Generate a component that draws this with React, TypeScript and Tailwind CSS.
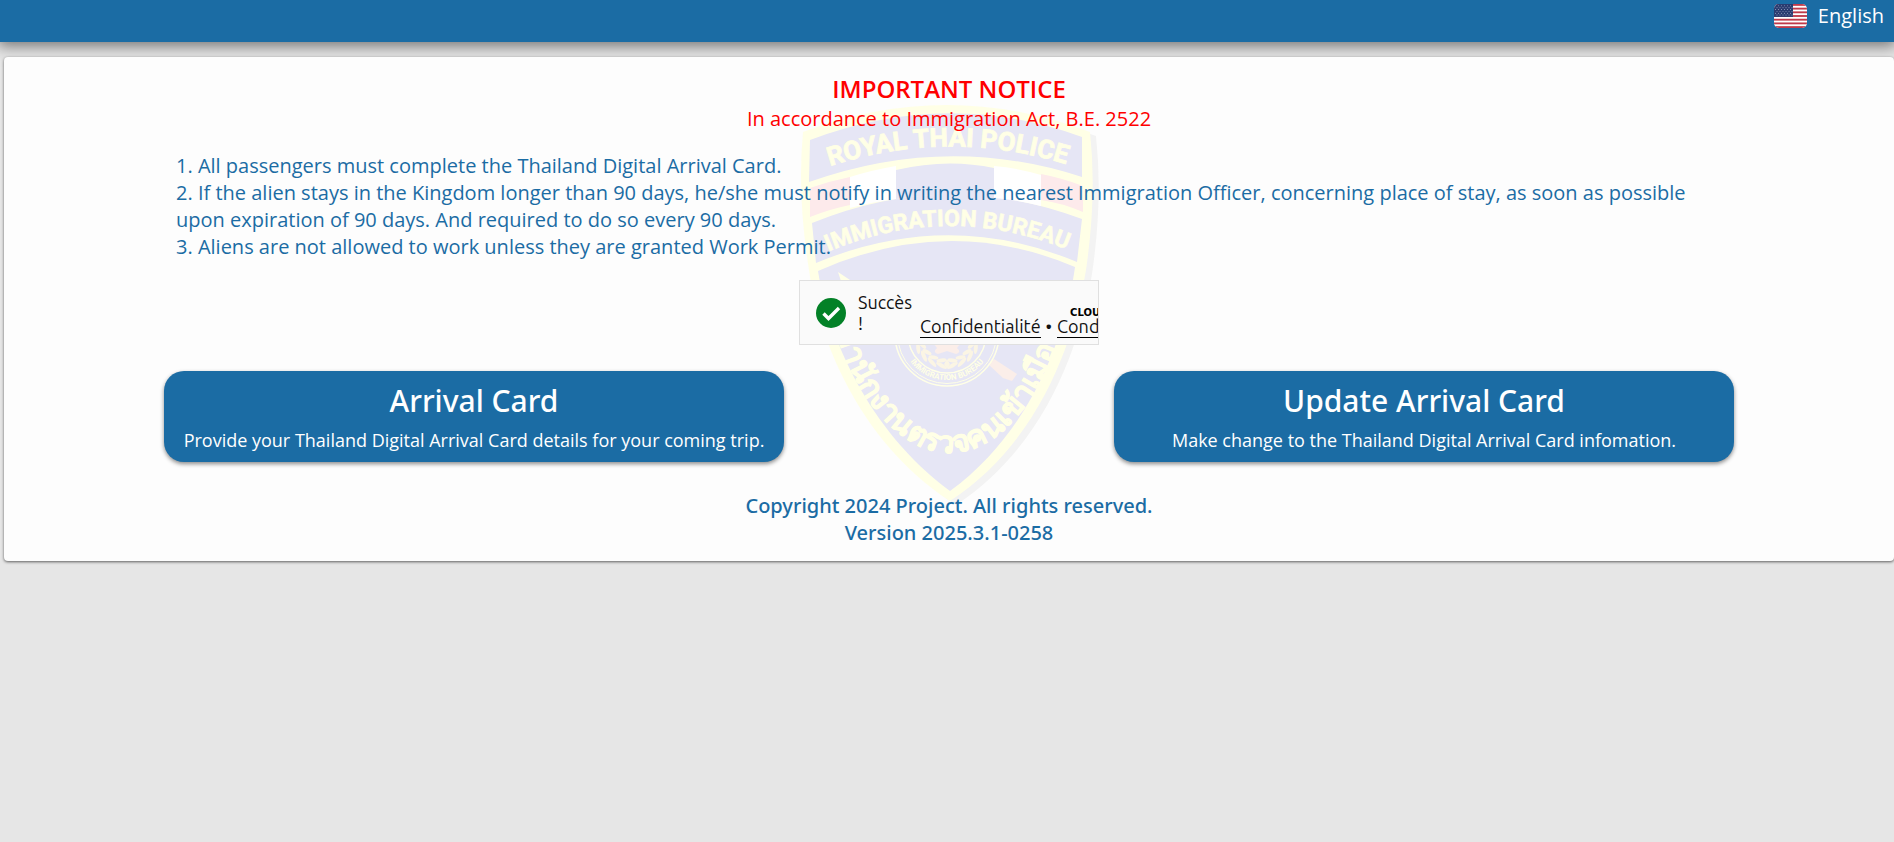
const NOTICES = [
  '1. All passengers must complete the Thailand Digital Arrival Card.',
  '2. If the alien stays in the Kingdom longer than 90 days, he/she must notify in writing the nearest Immigration Officer, concerning place of stay, as soon as possible upon expiration of 90 days. And required to do so every 90 days.',
  '3. Aliens are not allowed to work unless they are granted Work Permit.',
];

const ACTIONS = [
  {
    title: 'Arrival Card',
    text: 'Provide your Thailand Digital Arrival Card details for your coming trip.',
  },
  {
    title: 'Update Arrival Card',
    text: 'Make change to the Thailand Digital Arrival Card infomation.',
  },
];

const STRIPES = [0, 2, 4, 6, 8, 10, 12];
const STAR_ROWS = [0, 1, 2, 3, 4, 5];
const STAR_COLS = [0, 1, 2, 3, 4, 5];
const LEAVES = [18, 36, 54, 72, 90];

function UsFlag() {
  return (
    <svg className="h-6 w-[33px] rounded-[5px]" viewBox="0 0 33 26" preserveAspectRatio="none">
      <rect width="33" height="26" fill="#fff" />
      {STRIPES.map((i) => (
        <rect key={i} y={i * 2} width="33" height="2" fill="#c03a4a" />
      ))}
      <rect width="19" height="14" fill="#2a3c70" />
      {STAR_ROWS.map((row) =>
        STAR_COLS.map((col) => (
          <circle
            key={`${row}-${col}`}
            cx={1.5 + col * 3 + (row % 2) * 1.5}
            cy={2 + row * 2}
            r="0.5"
            fill="#c9cfdf"
          />
        ))
      )}
    </svg>
  );
}

function Emblem() {
  return (
    <svg
      className="pointer-events-none absolute left-1/2 top-[43px] h-[410px] w-[308px] -translate-x-1/2"
      viewBox="795 100 308 410"
      aria-hidden="true"
    >
      <defs>
        <path
          id="shield"
          d="M803 132Q947 78 1090 132Q1097 195 1086 270C1075 335 1043 440 950 501C857 440 818 335 809 270Q797 195 803 132Z"
        />
        <path id="arc-police" d="M824 168Q948 126 1072 166" />
        <path id="arc-bureau" d="M825 253Q948 200 1070 251" />
        <path id="arc-thai" d="M834 322C850 393 900 453 950 453C1000 453 1046 393 1064 322" />
        <path id="arc-ring" d="M901 334A46 46 0 0 0 993 334" />
      </defs>

      <use href="#shield" x="6" y="4" fill="#f3f3f3" />
      <use href="#shield" fill="#ffffe6" />

      <g fill="#e6e6f5">
        <path d="M810 140Q947 88 1082 137L1082 177Q947 133 809 182Z" />
        <path d="M896 170Q947 158 994 168V199Q947 191 896 199Z" />
        <path d="M812 223Q947 168 1082 219L1077 262Q948 208 816 263Z" />
        <path d="M818 271Q948 213 1075 267C1066 333 1033 430 950 491C867 430 828 335 818 271Z" />
      </g>
      <path d="M850 177Q872 170 896 166V199Q872 202 850 208Z" fill="#fff" />
      <path d="M994 166Q1018 168 1041 175V206Q1018 200 994 198Z" fill="#fff" />
      <path d="M810 188Q830 181 850 177V205Q830 209 810 217Z" fill="#fdeaeb" />
      <path d="M1041 174Q1062 178 1083 186V212Q1062 203 1041 200Z" fill="#fdeaeb" />

      <g fill="#ffffe6" textAnchor="middle" className="font-['Roboto'] font-bold">
        <text fontSize="26" stroke="#ffffe6" strokeWidth="0.8">
          <textPath href="#arc-police" startOffset="50%">ROYAL THAI POLICE</textPath>
        </text>
        <text fontSize="23" stroke="#ffffe6" strokeWidth="0.6">
          <textPath href="#arc-bureau" startOffset="50%">IMMIGRATION BUREAU</textPath>
        </text>
        <text fontSize="30" stroke="#ffffe6" strokeWidth="0.8" className="font-serif">
          <textPath href="#arc-thai" startOffset="50%">สำนักงานตรวจคนเข้าเมือง</textPath>
        </text>
        <text fontSize="8">
          <textPath href="#arc-ring" startOffset="50%">IMMIGRATION BUREAU</textPath>
        </text>
      </g>

      <path d="M838 272L853 282L842 284Z" fill="#ffffe6" />
      <path d="M988 364L994 359L1017 374L1012 381L1003 378Z" fill="#fbeee9" />
      <g fill="none" stroke="#ffffe6">
        <circle cx="947" cy="334" r="52" strokeWidth="1.5" />
        <circle cx="947" cy="334" r="49.5" strokeWidth="1" />
        <circle cx="947" cy="334" r="39" strokeWidth="1.5" />
      </g>
      <path
        d="M934 344H960L957 348Q962 352 956 354L947 351L938 354Q932 352 937 348Z"
        fill="#fbeee9"
      />
      {/* laurel round the lower half of the seal */}
      <g fill="#fbf5e4">
        {LEAVES.map((angle) => (
          <g key={angle}>
            <ellipse cx="947" cy="366" rx="6" ry="2" transform={`rotate(${angle - 8} 947 334) rotate(20 947 366)`} />
            <ellipse cx="947" cy="361" rx="5" ry="2" transform={`rotate(${angle - 6} 947 334) rotate(-20 947 361)`} />
            <ellipse cx="947" cy="366" rx="6" ry="2" transform={`rotate(${8 - angle} 947 334) rotate(-20 947 366)`} />
            <ellipse cx="947" cy="361" rx="5" ry="2" transform={`rotate(${6 - angle} 947 334) rotate(20 947 361)`} />
          </g>
        ))}
        <path d="M947 359L950 364L947 369L944 364Z" />
      </g>
    </svg>
  );
}

function ChallengeWidget() {
  return (
    <div className="relative mx-auto mt-5 flex h-[65px] w-[300px] items-center overflow-hidden border border-[#e0e0e0] bg-[#fafafa] pl-4 font-['Ubuntu','Noto_Sans',sans-serif] text-[18px] leading-[21px] text-[#111]">
      <svg className="size-[30px] shrink-0" viewBox="0 0 30 30" aria-hidden="true">
        <circle cx="15" cy="15" r="15" fill="#038127" />
        <path d="M7.5 15.5L12.5 20.5L23 10" fill="none" stroke="#fff" strokeWidth="3.4" />
      </svg>
      <p className="ml-3 w-[62px] shrink-0">Succès !</p>
      <div className="mt-[22px] flex shrink-0 flex-col items-end">
        <span className="font-['DejaVu_Sans'] text-[10px] font-bold leading-[7px] text-black">CLOUDFLARE</span>
        <div className="flex gap-[5px] whitespace-nowrap">
          <a href="#privacy" className="border-b border-black">Confidentialité</a>
          <span>•</span>
          <a href="#terms" className="border-b border-black">Conditions</a>
        </div>
      </div>
    </div>
  );
}

export default function App() {
  return (
    <div className="min-h-screen bg-[#e6e6e6] font-['Open_Sans',sans-serif] text-xl leading-[27px] text-[#1b6ca4]">
      <header className="relative flex h-[42px] items-start justify-end bg-[#1b6ca4] pr-2.5 shadow-[0_2px_14px_2px_rgba(0,0,0,0.5)]">
        <button type="button" className="flex items-center gap-[11px] pt-0.5 text-white">
          <UsFlag />
          English
        </button>
      </header>

      <main className="relative ml-1 mt-[15px] rounded bg-[#fdfdfd] pb-[15px] pt-4 shadow-[0_1px_3px_rgba(0,0,0,0.6)]">
        <Emblem />

        <div className="relative">
          <div className="text-center text-[#f00]">
            <h1 className="text-2xl font-semibold leading-8">IMPORTANT NOTICE</h1>
            <p>In accordance to Immigration Act, B.E. 2522</p>
          </div>

          <div className="mt-5 px-[172px]">
            {NOTICES.map((notice) => (
              <p key={notice}>{notice}</p>
            ))}
          </div>

          <ChallengeWidget />

          <div className="mt-[26px] flex justify-between px-[160px]">
            {ACTIONS.map((action) => (
              <button
                key={action.title}
                type="button"
                className="flex h-[91px] w-[620px] flex-col items-center justify-center gap-1.5 rounded-[20px] bg-[#1b6ca4] text-white shadow-[0_2px_4px_rgba(0,0,0,0.45)]"
              >
                <span className="font-['Noto_Sans'] text-[30px] font-medium leading-10">{action.title}</span>
                <span className="text-lg leading-[26px]">{action.text}</span>
              </button>
            ))}
          </div>

          <footer className="mt-[30px] text-center font-['Noto_Sans'] font-medium">
            <p>Copyright 2024 Project. All rights reserved.</p>
            <p>Version 2025.3.1-0258</p>
          </footer>
        </div>
      </main>
    </div>
  );
}
